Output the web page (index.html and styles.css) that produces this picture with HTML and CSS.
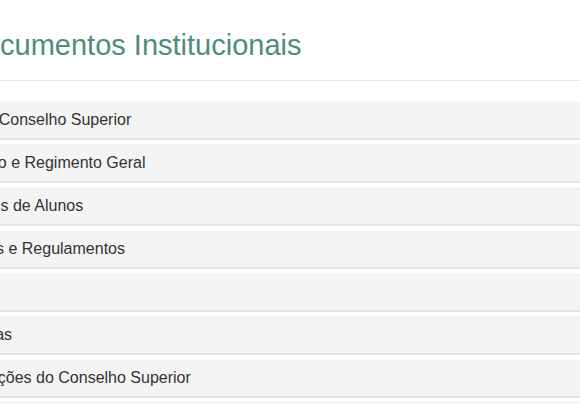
FILE: index.html
```html
<!DOCTYPE html>
<html lang="pt-BR">
<head>
<meta charset="utf-8">
<title>Documentos Institucionais</title>
<link rel="stylesheet" href="styles.css">
</head>
<body>
<div class="page">
  <header class="page-header">
    <h1 class="title">Documentos Institucionais</h1>
  </header>
  <ul class="doc-list">
    <li class="doc-item">Ata do Conselho Superior</li>
    <li class="doc-item">Estatuto e Regimento Geral</li>
    <li class="doc-item">Manuais de Alunos</li>
    <li class="doc-item">Normas e Regulamentos</li>
    <li class="doc-item">PDI</li>
    <li class="doc-item">Portarias</li>
    <li class="doc-item">Resoluções do Conselho Superior</li>
  </ul>
  <div class="list-end"></div>
</div>
</body>
</html>
```
FILE: styles.css
```css
html, body {
  margin: 0;
  padding: 0;
  background: #ffffff;
}
body {
  font-family: "Liberation Sans", Arial, sans-serif;
  color: #333333;
}
.page {
  margin-left: -62px;
  width: 700px;
}
.page-header {
  padding: 0 0 0 25px;
  margin: 0;
  height: 80px;
  border-bottom: 1px solid #e6e6e6;
  display: flex;
  align-items: flex-end;
}
.title {
  margin: 0 0 18px 0;
  font-size: 29px;
  font-weight: 400;
  line-height: 33px;
  color: #4e8c7d;
}
.doc-list {
  list-style: none;
  margin: 20px 0 0 0;
  padding: 0;
  display: flex;
  flex-direction: column;
  gap: 4px;
}
.doc-item {
  background: #f4f4f4;
  border-top: 1px solid #f8f8f8;
  border-bottom: 2px solid #e4e4e4;
  padding: 10px 10px 10px 10px;
  font-size: 16px;
  line-height: 16px;
  height: 16px;
}
.list-end {
  margin-top: 4px;
  height: 0;
  border-top: 1px solid #ececec;
}
```
